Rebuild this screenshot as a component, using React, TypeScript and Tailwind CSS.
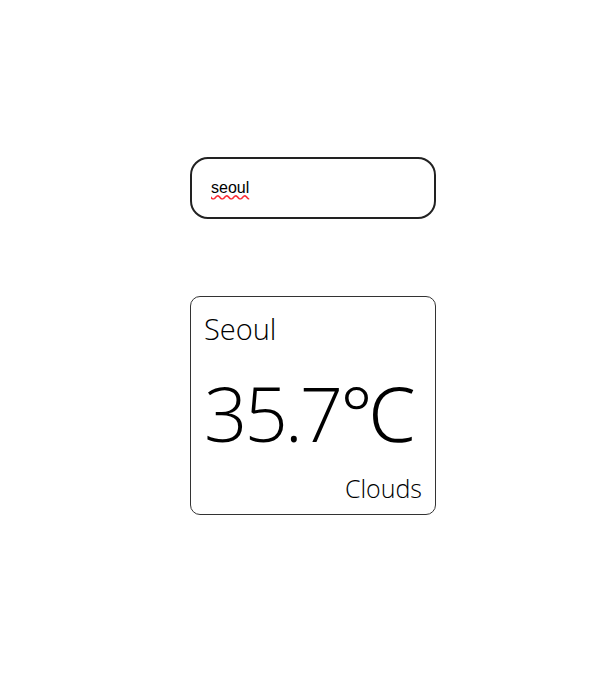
export default function App() {
  return (
    <div className="w-[606px] h-[697px] bg-white flex flex-col items-center pl-[20px]">
      <div className="mt-[157px] w-[246px] h-[62px] border-2 border-[#222] rounded-[18px] flex items-center px-[19px]">
        <input
          defaultValue="seoul"
          spellCheck={false}
          className="w-full outline-none bg-transparent text-[16px] text-black underline decoration-wavy decoration-red-500 [font-family:'Liberation_Sans',Arial,sans-serif]"
        />
      </div>
      <div className="mt-[77px] w-[246px] h-[219px] border border-[#333] rounded-[10px] flex flex-col justify-between px-[13px] pt-[14px] pb-[10px] text-black font-light [font-family:'Open_Sans','Noto_Sans',sans-serif]">
        <div className="text-[29px] leading-[36px]">Seoul</div>
        <div className="text-[76px] leading-[90px] tracking-[-3px] mt-[6px]">35.7℃</div>
        <div className="text-[25px] leading-[32px] text-right">Clouds</div>
      </div>
    </div>
  );
}
